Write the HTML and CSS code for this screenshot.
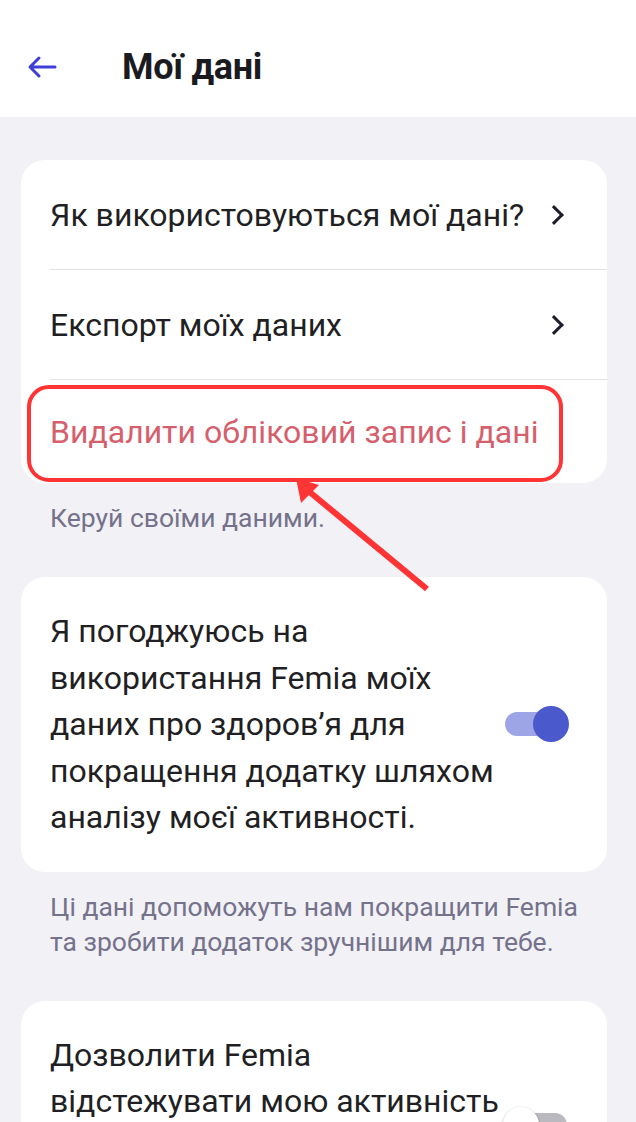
FILE: index.html
```html
<!DOCTYPE html>
<html lang="uk">
  <head>
    <meta charset="UTF-8" />
    <meta name="viewport" content="width=device-width, initial-scale=1.0" />
    <title>Мої дані</title>
    <link rel="stylesheet" href="styles.css">
  </head>
  <body>
    <header class="topbar">
      <button class="back-button" aria-label="Назад">
        <svg width="32" height="24" viewBox="0 0 32 24">
          <path d="M29 12H5M13 3L4 12l9 9" fill="none" stroke="#3f3fd8" stroke-width="3" stroke-linecap="round" stroke-linejoin="round"/>
        </svg>
      </button>
      <h1 class="title">Мої дані</h1>
    </header>

    <main class="content">
      <div class="card links">
        <div class="row">
          <span>Як використовуються мої дані?</span>
          <span class="chevron"></span>
        </div>
        <div class="row">
          <span>Експорт моїх даних</span>
          <span class="chevron"></span>
        </div>
        <div class="row danger">
          <span>Видалити обліковий запис і дані</span>
        </div>
        <div class="highlight"></div>
      </div>
      <p class="hint">Керуй своїми даними.</p>

      <div class="card toggle-card">
        <p>Я погоджуюсь на використання Femia моїх даних про здоров’я для покращення додатку шляхом аналізу моєї активності.</p>
        <span class="switch on"></span>
      </div>
      <p class="hint">Ці дані допоможуть нам покращити Femia та зробити додаток зручнішим для тебе.</p>

      <div class="card toggle-card">
        <p>Дозволити Femia відстежувати мою активність у додатку, щоб покращувати його роботу.</p>
        <span class="switch"></span>
      </div>
    </main>

    <!-- стрілка-підказка -->
    <svg class="pointer" width="636" height="1122" viewBox="0 0 636 1122">
      <line x1="427" y1="589" x2="306" y2="489" stroke="#ff3434" stroke-width="6"/>
      <polygon points="296,478 301,503 319,485" fill="#ff3434"/>
    </svg>
  </body>
</html>
```

FILE: styles.css
```css
* {
  box-sizing: border-box;
  margin: 0;
  padding: 0;
}

body {
  font-family: Roboto, "Noto Sans", sans-serif;
  background: #f1f1f6;
  color: #1f1f24;
  position: relative;
  overflow: hidden;
  height: 1122px;
}

.topbar {
  height: 117px;
  background: white;
  display: flex;
  align-items: center;
  padding: 16px 0 0 26px;
}

.back-button {
  background: none;
  border: none;
  display: flex;
  cursor: pointer;
}

.title {
  margin-left: 64px;
  font-size: 36px;
  font-weight: 700;
  color: #1b1b1f;
  letter-spacing: -0.3px;
}

.content {
  padding: 43px 29px 0 21px;
}

.card {
  background: white;
  border-radius: 24px;
  position: relative;
}

.row {
  display: flex;
  align-items: center;
  justify-content: space-between;
  margin-left: 29px;
  padding-right: 46px;
  height: 110px;
  font-size: 32px;
  border-bottom: 1.5px solid #e2e2e6;
}

.row.danger {
  height: 103px;
  border-bottom: none;
  color: #d65f6d;
}

.chevron {
  width: 14px;
  height: 14px;
  border-right: 3px solid #1c1c2c;
  border-bottom: 3px solid #1c1c2c;
  transform: rotate(-45deg);
}

.highlight {
  position: absolute;
  left: 6px;
  top: 225px;
  width: 536px;
  height: 97px;
  border: 4px solid #ff3434;
  border-radius: 22px;
}

.hint {
  font-size: 26.5px;
  line-height: 35px;
  color: #75728b;
  padding: 17px 10px 0 29px;
  margin-bottom: 42px;
}

.toggle-card {
  display: flex;
  align-items: center;
  padding: 31px 40px 31px 29px;
}

.toggle-card p {
  width: 450px;
  font-size: 32px;
  line-height: 46.5px;
}

.switch {
  margin-left: auto;
  position: relative;
  width: 62px;
  height: 24px;
  border-radius: 12px;
  background: #b9b9bf;
  flex-shrink: 0;
}

.switch::after {
  content: "";
  position: absolute;
  top: -6px;
  left: -2px;
  width: 36px;
  height: 36px;
  border-radius: 50%;
  background: white;
  box-shadow: 0 1px 3px rgba(0, 0, 0, 0.3);
}

.switch.on {
  background: #9ea5e6;
}

.switch.on::after {
  left: auto;
  right: -2px;
  background: #4a59cc;
  box-shadow: none;
}

.pointer {
  position: absolute;
  top: 0;
  left: 0;
  pointer-events: none;
}
```
